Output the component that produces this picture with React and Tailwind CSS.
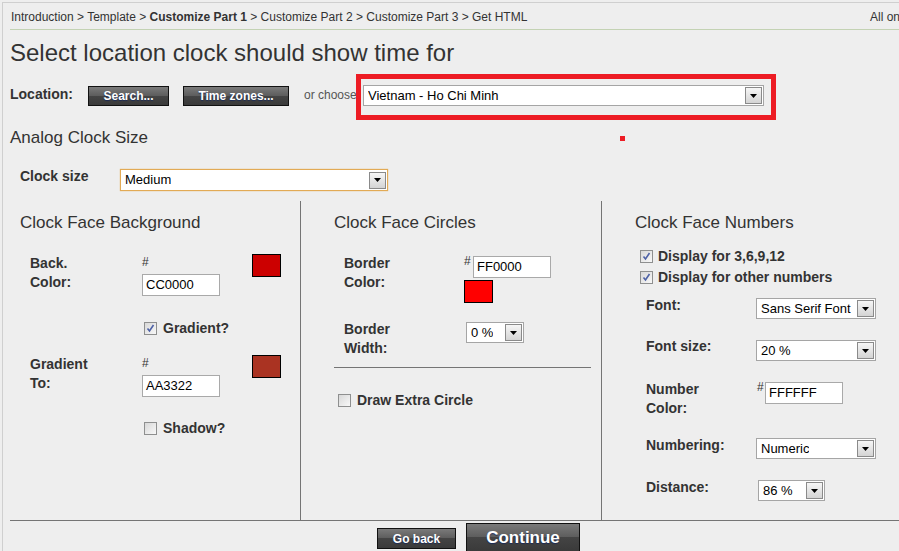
import React from "react";

function Arrow() {
  return (
    <span className="flex h-[17px] w-[17px] shrink-0 items-center justify-center border border-[#8a8a8a] bg-[linear-gradient(#f6f6f6,#d4d4d4)]">
      <svg width="7" height="4" viewBox="0 0 7 4">
        <path d="M0 0h7L3.5 4z" fill="#000" />
      </svg>
    </span>
  );
}

function Select({ value, className }) {
  return (
    <div
      className={`flex items-center justify-between bg-white pl-[4px] pr-[1px] text-[13px] text-black ${className}`}
    >
      <span className="overflow-hidden whitespace-nowrap">{value}</span>
      <Arrow />
    </div>
  );
}

function Field({ value, className = "" }) {
  return (
    <div
      className={`flex h-[22px] w-[78px] items-center border border-[#a9a9a9] bg-white pl-[3px] text-[13px] text-black ${className}`}
    >
      {value}
    </div>
  );
}

function Check({ checked }) {
  return (
    <span className="flex h-[13px] w-[13px] shrink-0 items-center justify-center border border-[#8e8f8f] bg-[linear-gradient(135deg,#d8d8d8,#f8f8f8)]">
      {checked && (
        <svg width="9" height="9" viewBox="0 0 9 9">
          <path d="M1.5 4.5l2 2.5 4-6" fill="none" stroke="#4d61a6" strokeWidth="1.6" />
        </svg>
      )}
    </span>
  );
}

function Btn({ children, className }) {
  return (
    <div
      className={`flex items-center justify-center border border-[#111] bg-[linear-gradient(#7a7a7a_0%,#5c5c5c_50%,#444_50%,#3a3a3a_100%)] font-bold text-white [text-shadow:0_1px_1px_#1b2a55] ${className}`}
    >
      {children}
    </div>
  );
}

function Label({ children, className = "" }) {
  return <div className={`text-[14px] font-bold leading-[19px] text-[#333] ${className}`}>{children}</div>;
}

export default function App() {
  return (
    <div className="relative h-[551px] w-full overflow-hidden bg-[#eeeeee] font-['Liberation_Sans',Arial,sans-serif] text-[#333]">
      {/* stray red mark */}
      <span className="absolute left-[620px] top-[136px] h-[5px] w-[5px] bg-[#ed1c24]" />

      <div className="ml-[2px] mt-[2px] border-l border-t border-[#cfcfcf] pl-[7px]">
        {/* breadcrumb */}
        <div className="flex h-[27px] items-center whitespace-nowrap border-b border-[#c3d2b3] pl-[1px] pt-[2px] text-[12px]">
          <div className="w-[859px] shrink-0">
            Introduction &gt; Template &gt; <b>Customize Part 1</b> &gt; Customize Part 2 &gt; Customize Part 3 &gt; Get HTML
          </div>
          <div className="shrink-0">All on one page</div>
        </div>

        <h1 className="mt-[9px] text-[24px] leading-[28px]">Select location clock should show time for</h1>

        {/* location row */}
        <div className="mt-[7px] flex items-start">
          <Label className="mt-[11px] w-[78px]">Location:</Label>
          <Btn className="mt-[12px] h-[20px] w-[81px] text-[12px]">Search...</Btn>
          <Btn className="ml-[14px] mt-[12px] h-[20px] w-[106px] text-[12px]">Time zones...</Btn>
          <span className="ml-[15px] mt-[14px] w-[52px] whitespace-nowrap text-[12px] leading-[14px] text-[#555]">or choose</span>
          <div className="h-[46px] w-[420px] border-[5px] border-[#ed1c24] pl-[2px] pt-[6px]">
            <Select value="Vietnam - Ho Chi Minh" className="h-[21px] w-[401px] border border-[#a5a5a5]" />
          </div>
        </div>

        <h2 className="mt-[8px] text-[17px] leading-[20px]">Analog Clock Size</h2>

        <div className="mt-[21px] flex items-start pl-[10px]">
          <Label className="-mt-[2px] w-[100px]">Clock size</Label>
          <Select value="Medium" className="h-[22px] w-[268px] border border-[#e2aa55] shadow-[0_0_1px_#e2aa55]" />
        </div>

        {/* three columns */}
        <div className="mt-[10px] grid h-[320px] grid-cols-[291px_301px_1fr] border-b border-[#747474]">
          {/* column 1 */}
          <div className="border-r border-[#747474] pl-[10px] pt-[12px]">
            <h3 className="text-[17px] leading-[20px]">Clock Face Background</h3>
            <div className="mt-[21px] flex items-start pl-[10px]">
              <Label className="w-[112px]">
                Back.
                <br />
                Color:
              </Label>
              <div className="w-[110px]">
                <div className="h-[17px] text-[12px] leading-[17px]">#</div>
                <Field value="CC0000" className="mt-[3px]" />
              </div>
              <span className="h-[23px] w-[29px] border border-black bg-[#cc0000]" />
            </div>
            <div className="mt-[23px] flex items-center gap-[6px] pl-[124px]">
              <Check checked />
              <Label>Gradient?</Label>
            </div>
            <div className="mt-[17px] flex items-start pl-[10px]">
              <Label className="w-[112px]">
                Gradient
                <br />
                To:
              </Label>
              <div className="w-[110px]">
                <div className="h-[17px] text-[12px] leading-[17px]">#</div>
                <Field value="AA3322" className="mt-[3px]" />
              </div>
              <span className="h-[23px] w-[29px] border border-black bg-[#aa3322]" />
            </div>
            <div className="mt-[22px] flex items-center gap-[6px] pl-[124px]">
              <Check />
              <Label>Shadow?</Label>
            </div>
          </div>

          {/* column 2 */}
          <div className="border-r border-[#747474] pl-[33px] pr-[10px] pt-[12px]">
            <h3 className="text-[17px] leading-[20px]">Clock Face Circles</h3>
            <div className="mt-[21px] flex items-start pl-[10px]">
              <Label className="w-[120px]">
                Border
                <br />
                Color:
              </Label>
              <div>
                <div className="flex items-start">
                  <span className="w-[9px] text-[12px] leading-[14px]">#</span>
                  <Field value="FF0000" className="mt-[2px]" />
                </div>
                <span className="mt-[2px] block h-[23px] w-[29px] border border-black bg-[#ff0000]" />
              </div>
            </div>
            <div className="mt-[17px] flex items-start pl-[10px]">
              <Label className="w-[122px]">
                Border
                <br />
                Width:
              </Label>
              <Select value="0 %" className="mt-[2px] h-[21px] w-[58px] border border-[#a5a5a5]" />
            </div>
            <div className="mt-[9px] border-t border-[#747474]" />
            <div className="mt-[23px] flex items-center gap-[6px] pl-[4px]">
              <Check />
              <Label>Draw Extra Circle</Label>
            </div>
          </div>

          {/* column 3 */}
          <div className="pl-[33px] pt-[12px]">
            <h3 className="text-[17px] leading-[20px]">Clock Face Numbers</h3>
            <div className="mt-[14px] flex flex-col gap-[2px] pl-[5px]">
              <div className="flex items-center gap-[5px]">
                <Check checked />
                <Label>Display for 3,6,9,12</Label>
              </div>
              <div className="flex items-center gap-[5px]">
                <Check checked />
                <Label>Display for other numbers</Label>
              </div>
            </div>
            <div className="mt-[11px] flex items-start pl-[11px]">
              <Label className="-mt-[2px] w-[110px]">Font:</Label>
              <Select value="Sans Serif Font" className="h-[21px] w-[120px] border border-[#a5a5a5]" />
            </div>
            <div className="mt-[21px] flex items-start pl-[11px]">
              <Label className="-mt-[3px] w-[110px]">Font size:</Label>
              <Select value="20 %" className="h-[21px] w-[120px] border border-[#a5a5a5]" />
            </div>
            <div className="mt-[19px] flex items-start pl-[11px]">
              <Label className="w-[111px]">
                Number
                <br />
                Color:
              </Label>
              <span className="w-[8px] text-[12px] leading-[14px]">#</span>
              <Field value="FFFFFF" className="mt-[2px]" />
            </div>
            <div className="mt-[20px] flex items-start pl-[11px]">
              <Label className="-mt-[2px] w-[110px]">Numbering:</Label>
              <Select value="Numeric" className="h-[21px] w-[120px] border border-[#a5a5a5]" />
            </div>
            <div className="mt-[21px] flex items-start pl-[11px]">
              <Label className="-mt-[2px] w-[112px]">Distance:</Label>
              <Select value="86 %" className="h-[21px] w-[67px] border border-[#a5a5a5]" />
            </div>
          </div>
        </div>

        {/* footer buttons */}
        <div className="flex items-start gap-[10px] pl-[367px]">
          <Btn className="mt-[7px] h-[21px] w-[79px] text-[12px]">Go back</Btn>
          <Btn className="mt-[2px] h-[29px] w-[114px] text-[17px]">Continue</Btn>
        </div>
      </div>
    </div>
  );
}
